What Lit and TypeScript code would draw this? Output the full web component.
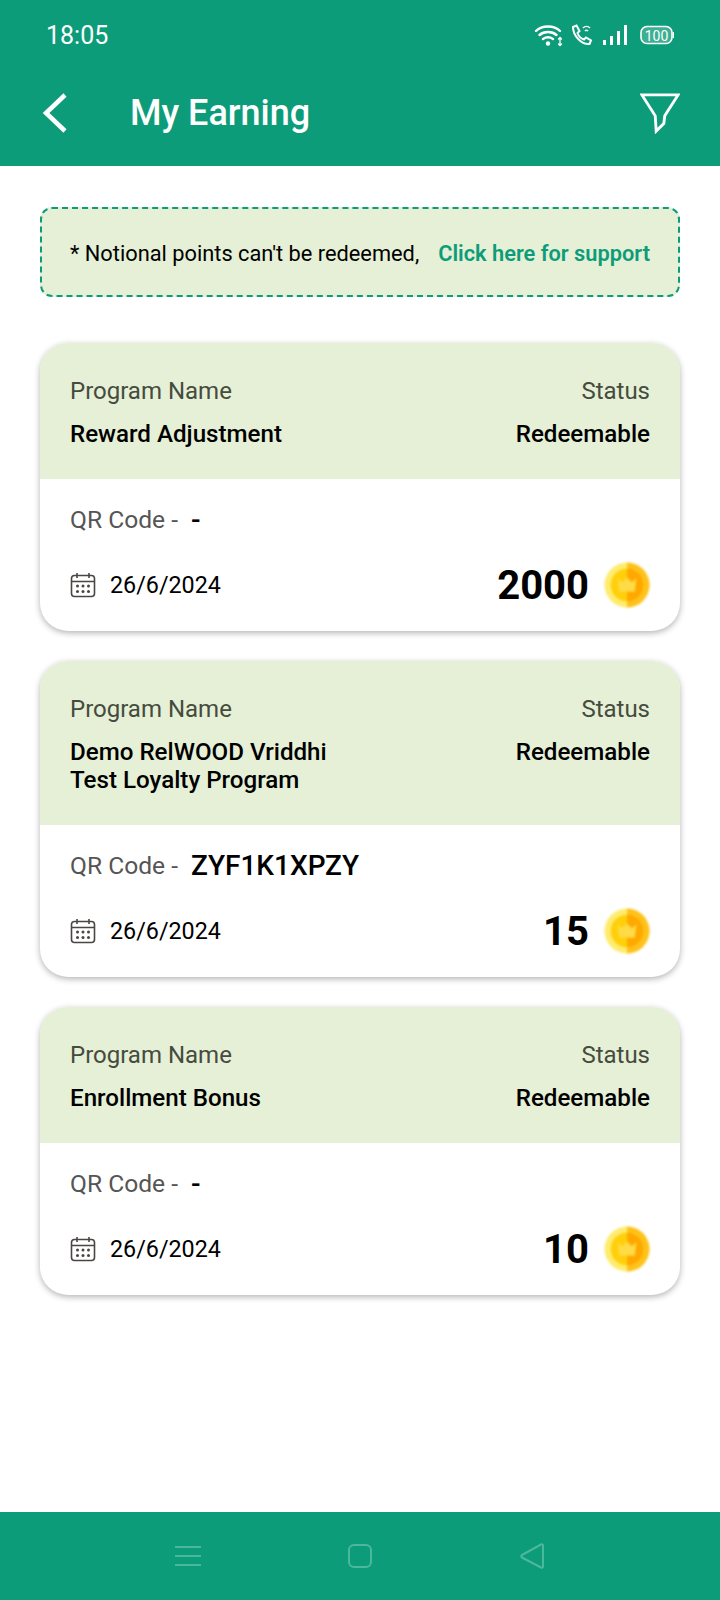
import { LitElement, html, css } from "lit";
import { customElement } from "lit/decorators.js";

const cards = [
  { name: ["Reward Adjustment"], qr: "-", pts: "2000" },
  { name: ["Demo RelWOOD Vriddhi", "Test Loyalty Program"], qr: "ZYF1K1XPZY", pts: "15" },
  { name: ["Enrollment Bonus"], qr: "-", pts: "10" },
];

const calendar = html`<svg class="cal" viewBox="0 0 26 26" fill="none" stroke="#4a4644" stroke-width="1.6">
  <rect x="1.5" y="3.5" width="23" height="21" rx="3"></rect>
  <path d="M1.5 9.5H24.5M7 1V6M19 1V6"></path>
  <g fill="#4a4644" stroke="none">
    <circle cx="7.5" cy="14" r="1.5"></circle><circle cx="13" cy="14" r="1.5"></circle><circle cx="18.5" cy="14" r="1.5"></circle>
    <circle cx="7.5" cy="19.5" r="1.5"></circle><circle cx="13" cy="19.5" r="1.5"></circle><circle cx="18.5" cy="19.5" r="1.5"></circle>
  </g></svg>`;

const coin = () => html`<svg class="coin" viewBox="0 0 48 48">
    <circle cx="24" cy="24" r="23.500" fill="#ffec6e"></circle>
    <path d="M24 .5A23.500 23.500 0 0 1 24 47.500Z" fill="#ffc21a"></path>
    <circle cx="24" cy="24" r="17" fill="#ffcf0a"></circle>
    <path d="M24 7A17 17 0 0 1 24 41Z" fill="#ffa800"></path>
    <path d="M14 17L19 21L24 16L29 21L34 17L32 31H16Z" fill="#ffdb45"></path>
  </svg>`;

@customElement("app-root")
export class AppRoot extends LitElement {
  static styles = css`
    :host { display: flex; flex-direction: column; width: 720px; height: 1600px; background: #fff; font-family: Roboto, "Liberation Sans", sans-serif; color: #000; }
    .top { height: 166px; background: #0d9c79; color: #fff; display: flex; flex-direction: column; flex: none; }
    .status { height: 70px; padding: 0 46px; display: flex; align-items: center; justify-content: space-between; font-size: 25px; box-sizing: border-box; }
    .status-icons { display: flex; align-items: center; gap: 8px; }
    .wifi { margin-right: -2px; }
    .battery { margin-left: 4px; }
    .bar { flex: 1; display: flex; align-items: center; padding: 0 40px 10px 42px; }
    .bar h1 { margin: 0 0 0 62px; flex: 1; font-size: 36px; font-weight: 500; line-height: 42px; }
    .content { flex: 1; padding: 41px 40px 0; display: flex; flex-direction: column; }
    .notice { height: 90px; box-sizing: border-box; border: 2px dashed #0d9c79; border-radius: 12px; background: #e5f0d6; padding: 2px 28px 0 28px; display: flex; align-items: center; justify-content: space-between; font-size: 21.800px; margin-bottom: 46px; }
    .notice b { color: #0d9c79; font-weight: 600; }
    .card { border-radius: 28px; background: #fff; box-shadow: 0 2px 6px rgba(0,0,0,.3); margin-bottom: 30px; overflow: hidden; }
    .head { background: #e5f0d6; padding: 32px 30px 31px; display: grid; grid-template-columns: 1fr auto; row-gap: 13px; }
    .label { font-size: 24px; line-height: 32px; color: #454b3e; }
    .r { text-align: right; }
    .value { font-size: 24.150px; line-height: 28px; font-weight: 500; }
    .body { padding: 24px 30px 21px; }
    .qr { display: flex; align-items: center; height: 32px; font-size: 24.600px; color: #555; }
    .qr span { margin-left: 13px; font-size: 28px; font-weight: 500; color: #000; }
    .foot { display: flex; align-items: center; margin-top: 25px; height: 50px; }
    .cal { width: 26px; height: 26px; margin-right: 14px; }
    .date { flex: 1; font-size: 23.300px; }
    .pts { font-size: 40px; font-weight: 700; margin-right: 15px; }
    .coin { width: 46px; height: 46px; filter: blur(1.300px); }
    .nav { height: 88px; flex: none; background: #0d9c79; display: flex; align-items: center; justify-content: center; gap: 144px; }
    .nav svg { width: 28px; height: 28px; fill: none; stroke: #4bb89c; stroke-width: 2; }
  `;

  render() {
    return html`
      <div class="top">
        <div class="status">
          <span>18:05</span>
          <div class="status-icons">
            <svg class="wifi" width="30" height="24" viewBox="0 0 30 24" fill="none" stroke="#fff" stroke-width="2.400" stroke-linecap="round">
              <path d="M2 8C8 2 20 2 26 8M5.500 12C10 8 18 8 22.500 12M9 16C12 14 16 14 19 16"></path>
              <circle cx="14" cy="20.500" r="2.200" fill="#fff" stroke="none"></circle>
              <path d="M26 14.500v8M24.500 16l1.500-1.500 1.500 1.500M24.500 21l1.500 1.500 1.500-1.500" stroke-width="1.300"></path>
            </svg>
            <svg width="24" height="24" viewBox="0 0 24 24" fill="none" stroke="#fff" stroke-width="2">
              <path d="M3 4L6.500 2.500L9.500 8L7.500 10C8.500 13 11 15.500 14 16.500L16 14.500L21 17.500L19.500 21C12 22 3 13 3 4Z"></path>
              <path d="M13 5C15 3 18 3 20 5M15 8C16 7 17 7 18 8" stroke-width="1.600"></path>
            </svg>
            <svg width="26" height="24" viewBox="0 0 26 24" fill="#fff">
              <rect x="1" y="17" width="3" height="5"></rect><rect x="8" y="13" width="3" height="9"></rect><rect x="15" y="8" width="3" height="14"></rect><rect x="22" y="2" width="3" height="20"></rect>
            </svg>
            <svg class="battery" width="34" height="20" viewBox="0 0 34 20">
              <rect x="1" y="1.500" width="31" height="17" rx="6" fill="rgba(255,255,255,.2)" stroke="#fff" stroke-width="1.600"></rect>
              <path d="M33.500 7v6" stroke="#fff" stroke-width="1.500"></path>
              <text x="16.500" y="15.500" text-anchor="middle" font-size="14" fill="#fff" font-family="Roboto">100</text>
            </svg>
          </div>
        </div>
        <div class="bar">
          <svg width="26" height="42" viewBox="0 0 26 42" fill="none" stroke="#fff" stroke-width="4.500"><path d="M23 3L4 21L23 39"></path></svg>
          <h1>My Earning</h1>
          <svg width="40" height="42" viewBox="0 0 42 44" fill="none" stroke="#fff" stroke-width="3"><path d="M2 3H40L26 25L25 33L17 41L16 25Z"></path></svg>
        </div>
      </div>
      <div class="content">
        <div class="notice"><span>* Notional points can't be redeemed,</span><b>Click here for support</b></div>
        ${cards.map(c => html`
          <div class="card">
            <div class="head">
              <div class="label">Program Name</div><div class="label r">Status</div>
              <div class="value">${c.name.map(n => html`<div>${n}</div>`)}</div><div class="value r">Redeemable</div>
            </div>
            <div class="body">
              <div class="qr">QR Code - <span>${c.qr}</span></div>
              <div class="foot">${calendar}<div class="date">26/6/2024</div><div class="pts">${c.pts}</div>${coin()}</div>
            </div>
          </div>`)}
      </div>
      <div class="nav">
        <svg viewBox="0 0 28 28"><path d="M1 5H27M1 14H27M1 23H27"></path></svg>
        <svg viewBox="0 0 28 28"><rect x="3" y="3" width="22" height="22" rx="5"></rect></svg>
        <svg viewBox="0 0 28 28"><path d="M25 3.500V24.500C25 25.500 24 26 23 25.500L4 15.500C3 15 3 13.500 4 13L23 2.500C24 2 25 2.500 25 3.500Z"></path></svg>
      </div>`;
  }
}
